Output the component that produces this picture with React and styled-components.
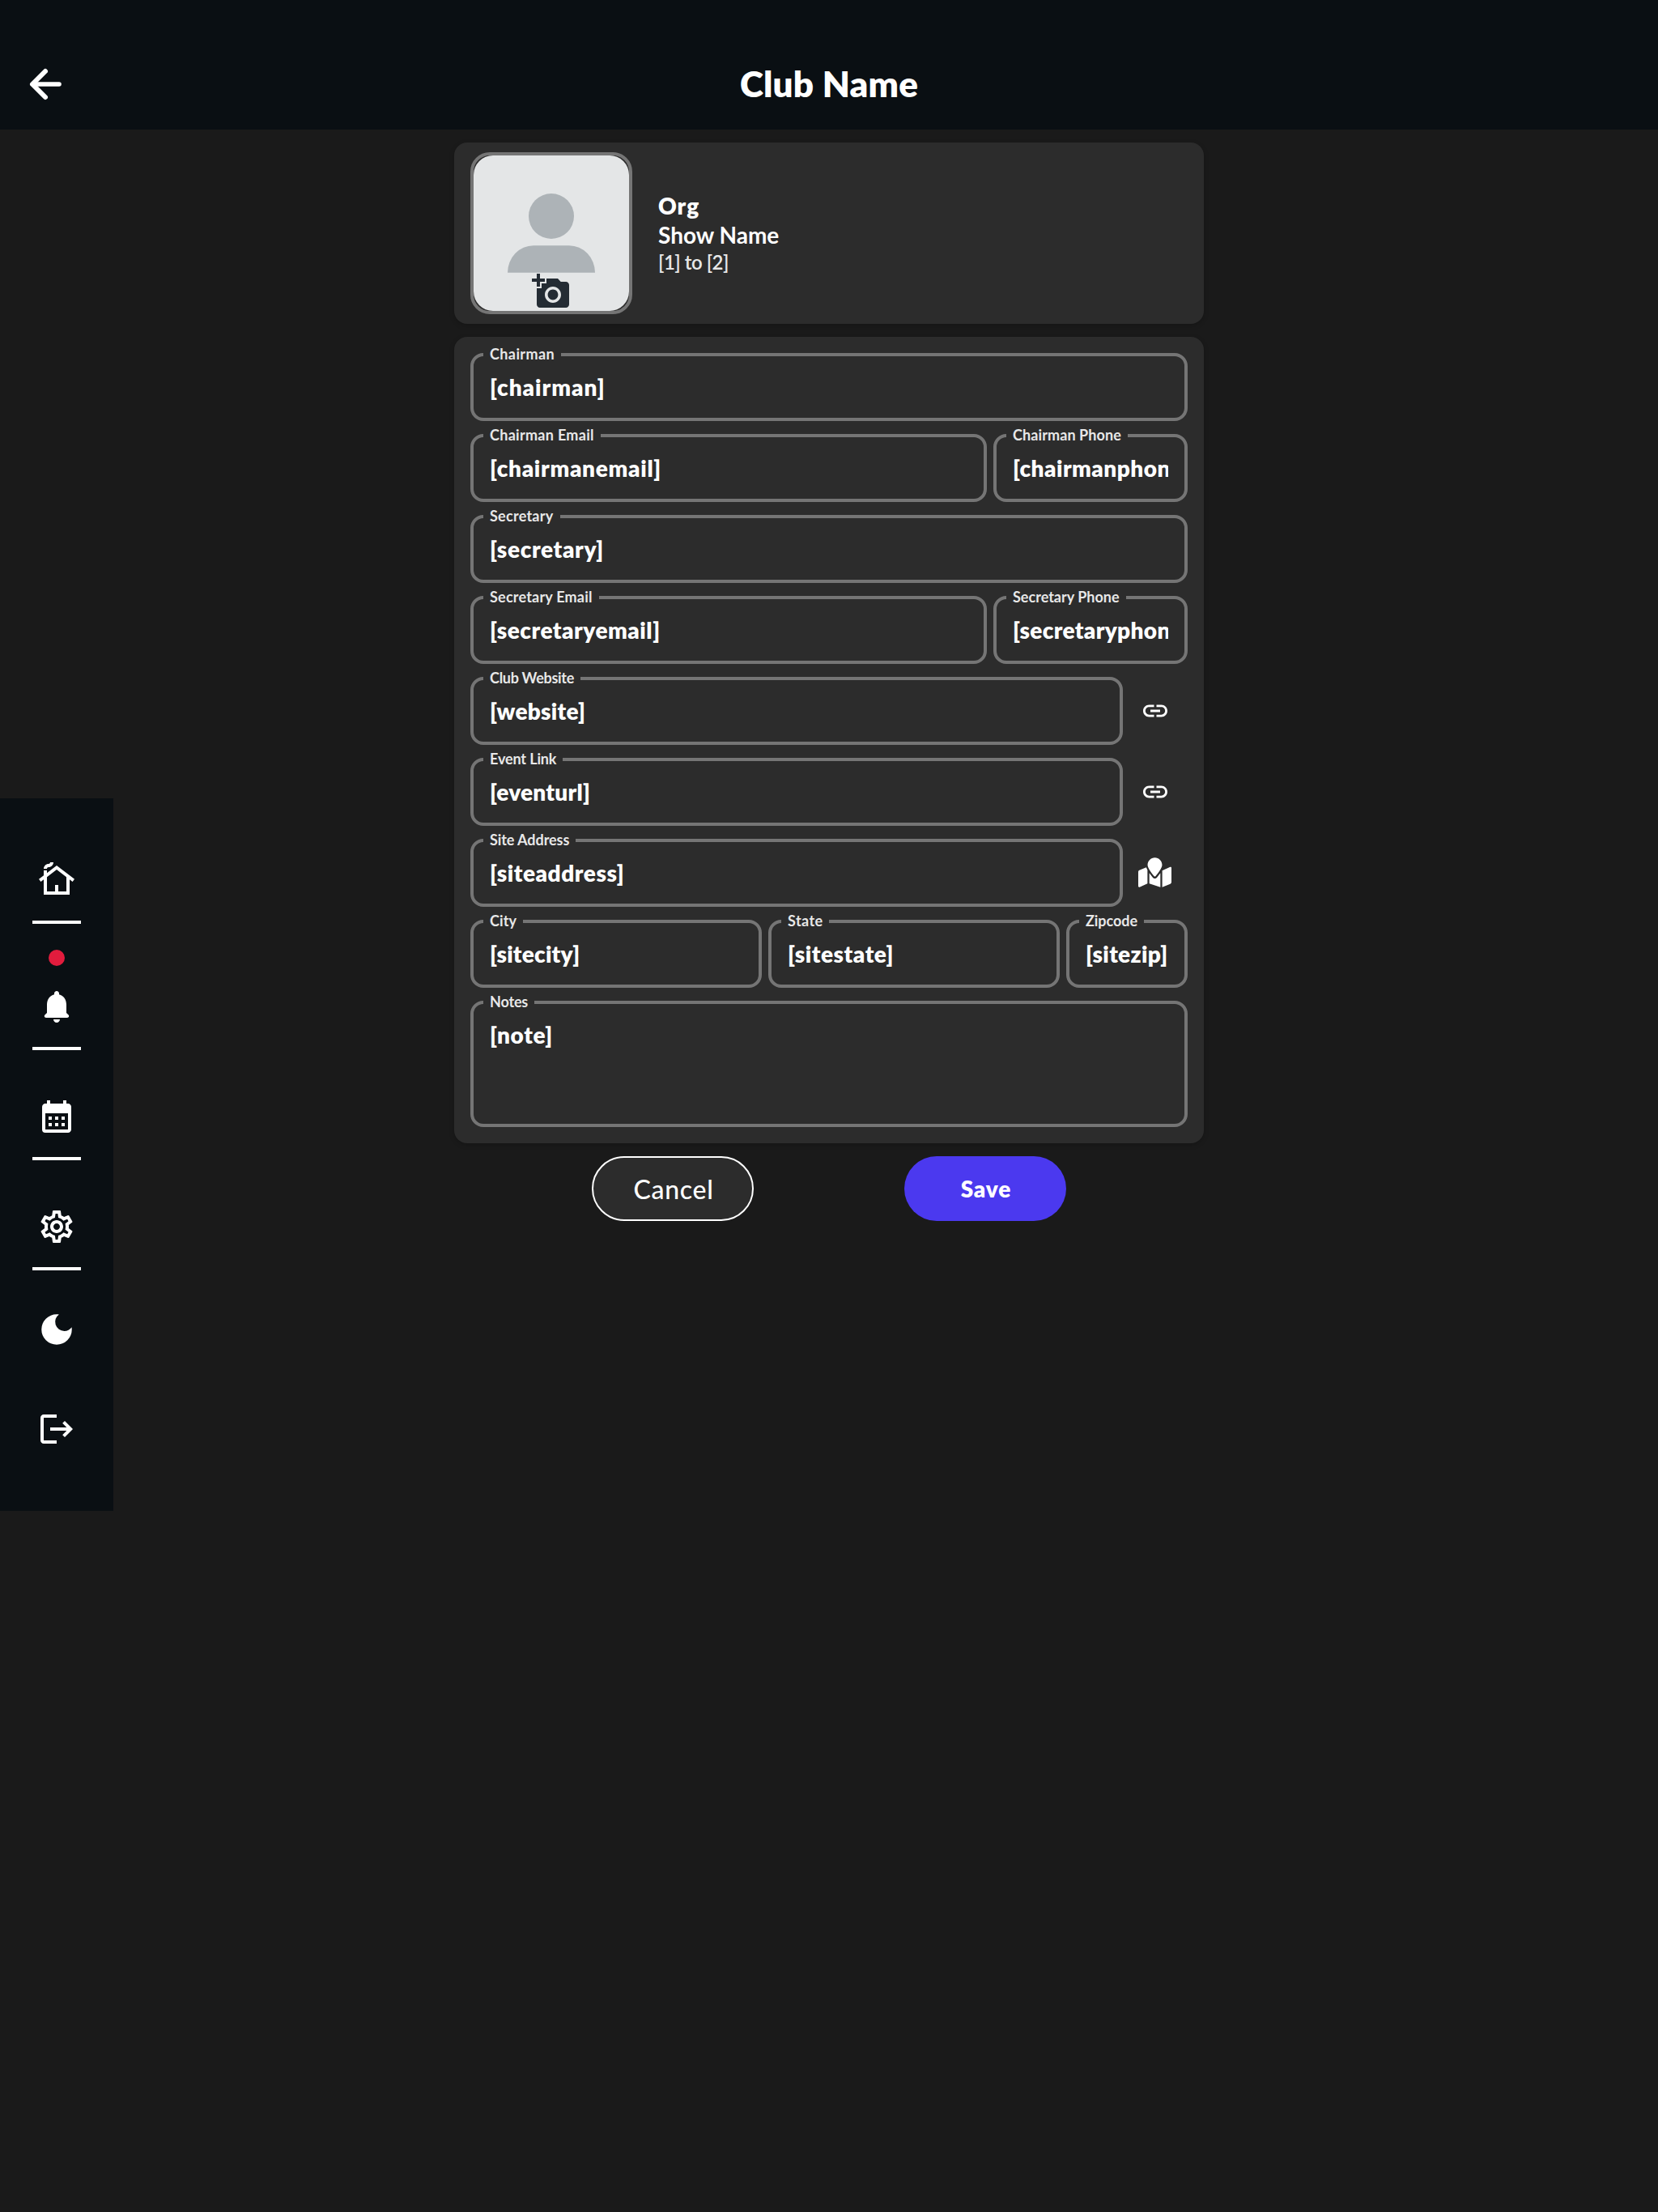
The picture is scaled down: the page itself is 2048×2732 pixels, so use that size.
import React from "react";
import styled, { createGlobalStyle } from "styled-components";
import { FaMapMarked } from "react-icons/fa";
import {
  MdAddAPhoto,
  MdCalendarMonth,
  MdDarkMode,
  MdLink,
  MdLogout,
  MdOutlineCottage,
  MdOutlineSettings,
} from "react-icons/md";

const GlobalStyle = createGlobalStyle`
  *, *::before, *::after { box-sizing: border-box; }
  html, body { margin: 0; background: #1a1a1a; }
  body { font-family: Lato, "Open Sans", sans-serif; color: #fff; }
  svg { display: block; }
`;

const Page = styled.div`
  width: 2048px;
  height: 2732px;
  overflow: hidden;
  background: #1a1a1a;
`;

const Header = styled.header`
  display: grid;
  grid-template-columns: 200px 1fr 200px;
  height: 160px;
  padding-top: 74px;
  background: #0a0f13;
`;

const BackButton = styled.button`
  width: 60px;
  height: 60px;
  margin-left: 26px;
  padding: 0;
  border: 0;
  background: none;
  color: #fff;
`;

const Title = styled.h1`
  margin: 3px 0 0;
  text-align: center;
  font-size: 44px;
  font-weight: 800;
  line-height: 52px;
  letter-spacing: 0.2px;
`;

const Body = styled.div`
  display: grid;
  grid-template-columns: 140px 926px;
  column-gap: 421px;
  align-items: start;
`;

const Sidebar = styled.nav`
  display: flex;
  flex-direction: column;
  align-items: center;
  height: 880px;
  margin-top: 826px;
  padding-top: 77px;
  background: #0a0f13;
`;

const NavIcon = styled.div`
  display: flex;
  align-items: center;
  justify-content: center;
  height: ${(p) => p.$slot || 48}px;
  margin-top: ${(p) => p.$gap || 0}px;
  font-size: ${(p) => p.$size || 48}px;
`;

const Divider = styled.div`
  width: 60px;
  height: 4px;
  margin-top: 26px;
  background: #fff;
`;

const AlertDot = styled.div`
  width: 20px;
  height: 20px;
  margin-top: 32px;
  border-radius: 50%;
  background: #e21c3d;
`;

const Main = styled.main`
  display: flex;
  flex-direction: column;
  gap: 16px;
  padding-top: 16px;
`;

const Card = styled.section`
  border-radius: 16px;
  background: #2c2c2c;
  box-shadow: 0 2px 6px rgba(0, 0, 0, 0.2);
`;

const ProfileCard = styled(Card)`
  display: flex;
  gap: 32px;
  height: 224px;
  padding: 12px 20px;
`;

const Avatar = styled.div`
  position: relative;
  width: 200px;
  height: 200px;
  border: 4px solid #757575;
  border-radius: 24px;
`;

const AvatarPicture = styled.svg`
  width: 192px;
  height: 192px;
  border-radius: 24px;
  background: #e4e6e7;
`;

const CameraBadge = styled.span`
  position: absolute;
  left: 72px;
  top: 144px;
  font-size: 48px;
  color: #242c34;
`;

const ShowInfo = styled.div`
  padding-top: 48px;
  font-size: 28px;
  font-weight: 700;
  line-height: 36px;
`;

const OrgLine = styled.div`
  font-weight: 800;
  letter-spacing: 1px;
`;

const ShowLine = styled.div`
  letter-spacing: 0;
`;

const DateLine = styled.div`
  padding-top: 1px;
  font-size: 24px;
  font-weight: 600;
  line-height: 30px;
  letter-spacing: -0.5px;
  color: #e8e8e8;
`;

const FormCard = styled(Card)`
  display: flex;
  flex-direction: column;
  gap: 16px;
  padding: 20px;
`;

const Row = styled.div`
  display: grid;
  grid-template-columns: ${(p) => p.$cols || "1fr"};
  column-gap: ${(p) => p.$gap || 0}px;
  align-items: center;
`;

const FieldBox = styled.label`
  position: relative;
  display: block;
  min-width: 0;
  height: ${(p) => (p.$tall ? 156 : 84)}px;
  padding: 20px 20px 0;
  border: 4px solid #757575;
  border-radius: 16px;
`;

const FieldLabel = styled.span`
  position: absolute;
  left: 12px;
  top: -14px;
  padding: 0 8px;
  background: #2c2c2c;
  color: #e8e8e8;
  font-size: 18px;
  font-weight: 700;
  line-height: 22px;
  white-space: nowrap;
  letter-spacing: ${(p) => p.$tracking - 0.06}px;
`;

const FieldValue = styled.span`
  display: block;
  overflow: hidden;
  font-size: 28px;
  font-weight: 800;
  line-height: 36px;
  white-space: nowrap;
  letter-spacing: ${(p) => p.$tracking - 0.26}px;
`;

const RowIcon = styled.button`
  display: flex;
  align-items: center;
  justify-content: center;
  width: 80px;
  height: 80px;
  padding: 0;
  border: 0;
  background: none;
  color: #fff;
  font-size: ${(p) => p.$size}px;
`;

const MapButton = styled(RowIcon)`
  padding: 0 1px 2px 0;
`;

const Actions = styled.div`
  display: flex;
  justify-content: space-between;
  padding: 0 170px;
`;

const Button = styled.button`
  width: 200px;
  height: 80px;
  padding: 0;
  border-radius: 40px;
  font-family: inherit;
  color: #fff;
`;

const CancelButton = styled(Button)`
  padding-left: 2px;
  border: 2px solid #fff;
  background: #2c2c2c;
  font-size: 32px;
  font-weight: 500;
  letter-spacing: 0.7px;
`;

const SaveButton = styled(Button)`
  padding: 0 0 1px 2px;
  border: 0;
  background: #4b39ef;
  font-size: 28px;
  font-weight: 800;
  letter-spacing: 0.9px;
`;

function Field({ label, value, lt = 0, vt = 0, tall }) {
  return (
    <FieldBox $tall={tall}>
      <FieldLabel $tracking={lt}>{label}</FieldLabel>
      <FieldValue $tracking={vt}>{value}</FieldValue>
    </FieldBox>
  );
}

function BackArrow() {
  return (
    <svg width="60" height="60" viewBox="0 0 60 60" fill="none" stroke="currentColor" strokeLinecap="round" strokeLinejoin="round">
      <path d="M30 14 14 30 30 46" strokeWidth="6" />
      <path d="M15 30H47" strokeWidth="5.6" />
    </svg>
  );
}

function BellIcon() {
  return (
    <svg width="48" height="48" viewBox="0 0 24 24" fill="currentColor">
      <path d="M12 22c1.1 0 2-.9 2-2h-4c0 1.1.89 2 2 2zm6-6v-5c0-3.07-1.63-5.64-4.5-6.32V4c0-.83-.67-1.5-1.5-1.5s-1.5.67-1.5 1.5v.68C7.64 5.36 6 7.92 6 11v5l-1.29 1.29c-.63.63-.19 1.71.7 1.71h13.17c.89 0 1.34-1.08.71-1.71L18 16z" />
    </svg>
  );
}

export default function App() {
  return (
    <Page>
      <GlobalStyle />
      <Header>
        <BackButton aria-label="Back">
          <BackArrow />
        </BackButton>
        <Title>Club Name</Title>
      </Header>
      <Body>
        <Sidebar>
          <NavIcon><MdOutlineCottage /></NavIcon>
          <Divider />
          <AlertDot />
          <NavIcon $gap={26}><BellIcon /></NavIcon>
          <Divider />
          <NavIcon $gap={58}><MdCalendarMonth /></NavIcon>
          <Divider />
          <NavIcon $gap={58}><MdOutlineSettings /></NavIcon>
          <Divider />
          <NavIcon $gap={47} $slot={52} $size={50}><MdDarkMode /></NavIcon>
          <NavIcon $gap={73}><MdLogout /></NavIcon>
        </Sidebar>
        <Main>
          <ProfileCard>
            <Avatar>
              <AvatarPicture viewBox="0 0 192 192" fill="#adb3b7">
                <circle cx="96" cy="75" r="28" />
                <path d="M42 144.7a32 33.4 0 0 1 32-33.4h44a32 33.4 0 0 1 32 33.4z" />
              </AvatarPicture>
              <CameraBadge><MdAddAPhoto /></CameraBadge>
            </Avatar>
            <ShowInfo>
              <OrgLine>Org</OrgLine>
              <ShowLine>Show Name</ShowLine>
              <DateLine>[1] to [2]</DateLine>
            </ShowInfo>
          </ProfileCard>
          <FormCard>
            <Row>
              <Field label="Chairman" value="[chairman]" lt={0.46} vt={1.25} />
            </Row>
            <Row $cols="1fr 240px" $gap={8}>
              <Field label="Chairman Email" value="[chairmanemail]" lt={0.36} vt={0.95} />
              <Field label="Chairman Phone" value="[chairmanphone]" lt={0.16} vt={0.72} />
            </Row>
            <Row>
              <Field label="Secretary" value="[secretary]" lt={0.32} vt={0.9} />
            </Row>
            <Row $cols="1fr 240px" $gap={8}>
              <Field label="Secretary Email" value="[secretaryemail]" lt={0.27} vt={0.78} />
              <Field label="Secretary Phone" value="[secretaryphone]" lt={0.07} vt={0.6} />
            </Row>
            <Row $cols="1fr 80px">
              <Field label="Club Website" value="[website]" lt={-0.22} vt={0.5} />
              <RowIcon $size={36} aria-label="Open website"><MdLink /></RowIcon>
            </Row>
            <Row $cols="1fr 80px">
              <Field label="Event Link" value="[eventurl]" lt={-0.07} vt={0.5} />
              <RowIcon $size={36} aria-label="Open event"><MdLink /></RowIcon>
            </Row>
            <Row $cols="1fr 80px">
              <Field label="Site Address" value="[siteaddress]" vt={0.8} />
              <MapButton $size={41} aria-label="Open map"><FaMapMarked /></MapButton>
            </Row>
            <Row $cols="360px 360px 150px" $gap={8}>
              <Field label="City" value="[sitecity]" lt={0.15} vt={0.5} />
              <Field label="State" value="[sitestate]" lt={0.46} vt={0.8} />
              <Field label="Zipcode" value="[sitezip]" vt={0.6} />
            </Row>
            <Row>
              <Field label="Notes" value="[note]" lt={-0.1} vt={0.9} tall />
            </Row>
          </FormCard>
          <Actions>
            <CancelButton>Cancel</CancelButton>
            <SaveButton>Save</SaveButton>
          </Actions>
        </Main>
      </Body>
    </Page>
  );
}
